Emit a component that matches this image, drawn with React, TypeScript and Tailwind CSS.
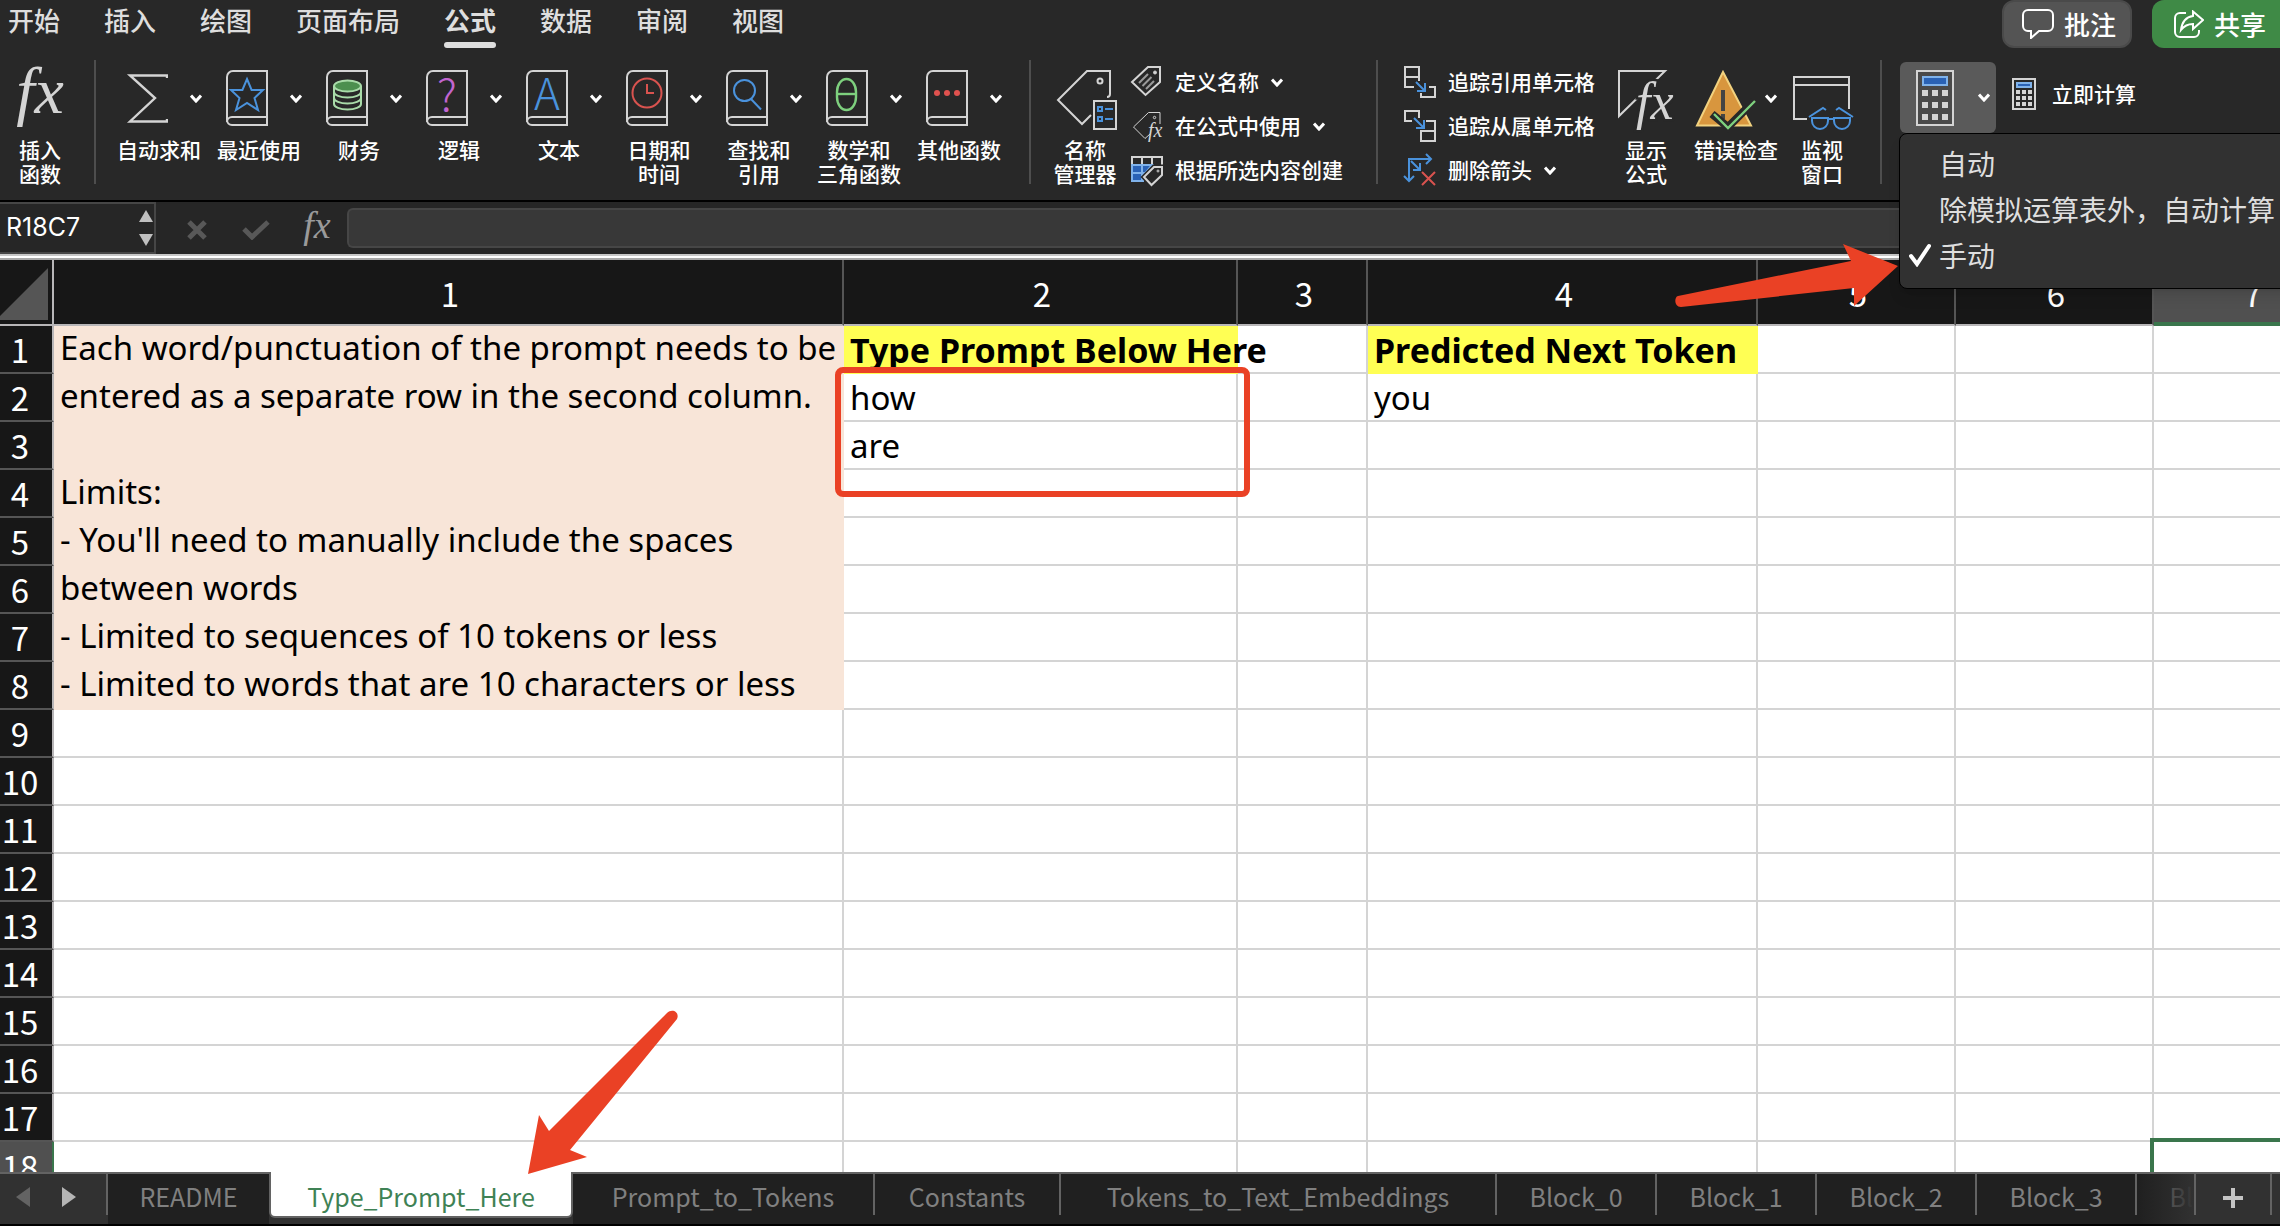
import React from 'react';

const GREY = '#d4d4d4';
const BLUE = '#4a92dc';
const RED = '#ea4125';
const SERIF = '"Liberation Serif", serif';
const CJK = '"Noto Sans CJK SC", sans-serif';

function Chevron() {
  return (
    <svg width="12" height="9" viewBox="0 0 12 9" className="shrink-0" fill="none" stroke="#ffffff" strokeWidth="3" aria-hidden="true">
      <path d="M1 1.5 6 7l5-5.5" />
    </svg>
  );
}

function FxIcon({ width, height, size, y, color }: { width: number; height: number; size: number; y: number; color: string }) {
  return (
    <svg width={width} height={height} className="shrink-0 overflow-visible" aria-hidden="true">
      <text x={width / 2} y={y} textAnchor="middle" fontFamily={SERIF} fontStyle="italic" fontSize={size} fill={color}>
        fx
      </text>
    </svg>
  );
}

function SigmaIcon() {
  return (
    <svg width="42" height="56" viewBox="0 0 42 56" fill="none" stroke={GREY} strokeWidth="2.4" aria-hidden="true">
      <path d="M41 8V5.5H4L29 28 4 51.500H41V49" />
    </svg>
  );
}

function Book({ children }: { children: React.ReactNode }) {
  return (
    <svg width="42" height="56" viewBox="0 0 42 56" fill="none" stroke={GREY} strokeWidth="2" aria-hidden="true">
      <path d="M41 1H7a6 6 0 0 0-6 6v43a5 5 0 0 0 5 5h35Z" />
      <path d="M41 47H6a5 5 0 0 0-5 5" />
      {children}
    </svg>
  );
}

const starArt = <path d="m21 9 4.600 11H37l-8.500 8 3.500 12-11-7-11 7 3.500-12L5 20h11.400Z" stroke={BLUE} />;
const moneyArt = (
  <g stroke="#a9dba9">
    <path d="M8 16v18c0 3 6 5.500 13.500 5.500S35 37 35 34V16" />
    <path d="M8 22c0 3 6 5.500 13.500 5.500S35 25 35 22M8 28c0 3 6 5.500 13.500 5.500S35 31 35 28" />
    <ellipse cx="21.500" cy="16" rx="13.500" ry="5.500" fill="#4c8f4f" />
  </g>
);
const logicArt = (
  <text x="21" y="41" textAnchor="middle" fontFamily={CJK} fontWeight="300" fontSize="44" fill="#c265d0" stroke="none">
    ?
  </text>
);
const textArt = (
  <text x="21" y="40" textAnchor="middle" fontFamily={CJK} fontWeight="300" fontSize="44" fill={BLUE} stroke="none">
    A
  </text>
);
const clockArt = (
  <g stroke="#d9534f">
    <circle cx="21" cy="23" r="14.500" />
    <path d="M21 14v9h7" />
  </g>
);
const searchArt = (
  <g stroke={BLUE}>
    <circle cx="18.500" cy="20.500" r="10.500" />
    <path d="m25 29 10 10.500" />
  </g>
);
const thetaArt = (
  <g stroke="#7ed07e" strokeWidth="2.400">
    <rect x="11" y="9" width="19" height="31" rx="9.500" ry="13" />
    <path d="M11 24h19" />
  </g>
);
const dotsArt = (
  <g fill="#e0524f" stroke="none">
    <circle cx="11" cy="23" r="3" />
    <circle cx="21" cy="23" r="3" />
    <circle cx="31" cy="23" r="3" />
  </g>
);

const functions: { lines: string[]; icon: React.ReactNode }[] = [
  { lines: ['自动求和'], icon: <SigmaIcon /> },
  { lines: ['最近使用'], icon: <Book>{starArt}</Book> },
  { lines: ['财务'], icon: <Book>{moneyArt}</Book> },
  { lines: ['逻辑'], icon: <Book>{logicArt}</Book> },
  { lines: ['文本'], icon: <Book>{textArt}</Book> },
  { lines: ['日期和', '时间'], icon: <Book>{clockArt}</Book> },
  { lines: ['查找和', '引用'], icon: <Book>{searchArt}</Book> },
  { lines: ['数学和', '三角函数'], icon: <Book>{thetaArt}</Book> },
  { lines: ['其他函数'], icon: <Book>{dotsArt}</Book> },
];

function NameManagerIcon() {
  return (
    <svg width="64" height="56" viewBox="0 0 64 56" className="overflow-visible" fill="none" stroke={GREY} strokeWidth="2" aria-hidden="true">
      <path d="M54 27c2 0 3-1 3-3V1H34L5 30l24 24 9-9" />
      <circle cx="47" cy="11" r="2.500" />
      <rect x="41" y="31" width="22" height="28" />
      <g stroke={BLUE}>
        <rect x="45" y="37" width="4" height="4" />
        <rect x="45" y="47" width="4" height="4" />
        <path d="M52 39h8M52 49h8" />
      </g>
    </svg>
  );
}

function ListIcon({ children }: { children: React.ReactNode }) {
  return (
    <svg width="32" height="32" viewBox="0 0 32 32" className="shrink-0 overflow-visible" fill="none" stroke={GREY} strokeWidth="2" aria-hidden="true">
      {children}
    </svg>
  );
}

const defineIcon = (
  <ListIcon>
    <path d="M17 1h12v15L14.500 29 1 16Z" />
    <circle cx="24" cy="6.500" r="1.500" fill={GREY} strokeWidth="1" />
    <path d="m8 17 9-9M11.500 20l9-9M15 23l8-8" stroke="#9a9a9a" />
  </ListIcon>
);
const useIcon = (
  <ListIcon>
    <g strokeWidth="1">
      <path d="M29 14V2.500H17.500L2.500 17 14 28.500l5-4.500" />
      <circle cx="23.500" cy="7.500" r="1.200" />
    </g>
    <text x="17" y="27" fontFamily={SERIF} fontStyle="italic" fontSize="20" fill={GREY} stroke="none">
      fx
    </text>
  </ListIcon>
);
const createIcon = (
  <ListIcon>
    <path d="M1 10V3h30v8M11 3v7M21 3v7" />
    <path d="M1 11h20l-9 11v5H1Z" fill="#2a62b5" stroke="#7fb2ea" />
    <path d="M11 11v16M1 19h13" stroke="#7fb2ea" />
    <path d="M23 13h8v8L20.500 31 13 23Z" fill="#282828" stroke="#282828" strokeWidth="5" />
    <path d="M23 13h8v8L20.500 31 13 23Z" fill="#282828" />
    <circle cx="27" cy="17" r="1" strokeWidth="1" />
  </ListIcon>
);
const precedentsIcon = (
  <ListIcon>
    <path d="M15 15V1H1v20h9M1 11h14M25 21h6v10H17v-4" />
    <path d="m12 16 9 9M21 17v8h-8" stroke={BLUE} />
  </ListIcon>
);
const dependentsIcon = (
  <ListIcon>
    <path d="M15 8V1H1v10h7M22 11h9v20H17V21h14" />
    <path d="m10 8 10 10M20 10v8h-8" stroke={BLUE} />
  </ListIcon>
);
const removeIcon = (
  <ListIcon>
    <path d="M5 27V5h22M22 0l5 5-5 5M0 22l5 5 5-5M7 7l9 9M16 9v7H9" stroke={BLUE} />
    <path d="m18 18 13 13M31 18 18 31" stroke="#d9534f" />
  </ListIcon>
);

function ShowFormulaIcon() {
  return (
    <svg width="56" height="56" viewBox="0 0 56 56" className="overflow-visible" fill="none" stroke={GREY} strokeWidth="2" aria-hidden="true">
      <path d="M1 46V1h46Z" />
      <text x="18" y="49" fontFamily={SERIF} fontStyle="italic" fontSize="52" fill={GREY} stroke="#282828" strokeWidth="5" paintOrder="stroke">
        fx
      </text>
    </svg>
  );
}

function ErrorCheckIcon() {
  return (
    <svg width="60" height="56" viewBox="0 0 60 56" className="overflow-visible" fill="none" aria-hidden="true">
      <path d="M28 2 2 55.500h54Z" fill="#d8963e" stroke="#f2d27f" strokeWidth="2" />
      <path d="M28 20v21M28 44v5" stroke="#444444" strokeWidth="4" />
      <path d="m17 44 16 13 26-26" stroke="#282828" strokeWidth="8" />
      <path d="m19 44 14 14 27-27" stroke="#7ed07e" strokeWidth="2.400" />
    </svg>
  );
}

function WatchIcon() {
  return (
    <svg width="60" height="56" viewBox="0 0 60 56" className="overflow-visible" fill="none" stroke={GREY} strokeWidth="2" aria-hidden="true">
      <path d="M15 49H2V7h55v32M2 15h55" />
      <path d="M20 48h16v3a8 8 0 0 1-16 0ZM42 48h16v3a8 8 0 0 1-16 0ZM36 49h6M17 47l14-9 3 2M61 47l-14-9-3 2" stroke={BLUE} />
    </svg>
  );
}

function CalculatorIcon() {
  return (
    <svg width="38" height="56" viewBox="0 0 38 56" aria-hidden="true">
      <rect x="1" y="1" width="36" height="54" fill="#4a4a4a" stroke={GREY} strokeWidth="2" />
      <rect x="7" y="7" width="24" height="8" fill="#2a62b5" stroke="#7fb2ea" strokeWidth="2" />
      {[20, 32, 44].map((y) => [6, 16, 26].map((x) => <rect key={`${x}-${y}`} x={x} y={y} width="6" height="6" fill={GREY} />))}
    </svg>
  );
}

function SmallCalculatorIcon() {
  return (
    <svg width="24" height="32" viewBox="0 0 24 32" aria-hidden="true">
      <rect x="1" y="1" width="22" height="30" fill="none" stroke={GREY} strokeWidth="2" />
      <rect x="5" y="5" width="14" height="4" fill="#2a62b5" stroke="#7fb2ea" strokeWidth="2" />
      {[12, 18, 24].map((y) => [4, 10, 16].map((x) => <rect key={`${x}-${y}`} x={x} y={y} width="4" height="4" fill={GREY} />))}
    </svg>
  );
}

function BigButton({ lines, children, className = '' }: { lines: string[]; children: React.ReactNode; className?: string }) {
  return (
    <button type="button" className={`flex shrink-0 flex-col items-center gap-[11px] pt-[22px] ${className}`}>
      <span className="flex h-14 items-center">{children}</span>
      <span className="flex flex-col items-center whitespace-nowrap text-[21px] leading-6 font-medium">
        {lines.map((l) => (
          <span key={l}>{l}</span>
        ))}
      </span>
    </button>
  );
}

function ListButton({ icon, label, menu = false }: { icon: React.ReactNode; label: string; menu?: boolean }) {
  return (
    <button type="button" className="flex h-11 items-center gap-3 whitespace-nowrap text-[21px] font-medium">
      {icon}
      {label}
      {menu && <Chevron />}
    </button>
  );
}

function Separator({ className }: { className: string }) {
  return <div className={`mt-3 h-[124px] w-0.5 shrink-0 bg-[#4e4e4e] ${className}`} />;
}

const menuTabs = ['开始', '插入', '绘图', '页面布局', '公式', '数据', '审阅', '视图'];

function MenuBar() {
  return (
    <div className="flex h-12 justify-between">
      <nav className="flex gap-11 pl-2 text-[26px] font-medium text-[#dedede]">
        {menuTabs.map((t) => (
          <button key={t} type="button" className={t === '公式' ? 'flex shrink-0 flex-col font-bold whitespace-nowrap' : 'flex shrink-0 flex-col whitespace-nowrap'}>
            <span className="h-[42px] leading-10">{t}</span>
            {t === '公式' && <span className="h-1.5 w-full rounded-full bg-[#dedede]" />}
          </button>
        ))}
      </nav>
      <div className="flex shrink-0 gap-5 text-[26px] font-medium text-white">
        <button type="button" className="flex h-12 w-[130px] items-center gap-2.5 rounded-xl border-2 border-[#4a4a4a] bg-[#545454] pl-[18px] leading-none">
          <svg width="32" height="30" viewBox="0 0 32 30" fill="none" stroke="#ffffff" strokeWidth="2" aria-hidden="true">
            <path d="M6 1h20a5 5 0 0 1 5 5v11a5 5 0 0 1-5 5h-9l-8 7v-7H6a5 5 0 0 1-5-5V6a5 5 0 0 1 5-5Z" />
          </svg>
          批注
        </button>
        <button type="button" className="flex h-12 w-32 items-center gap-2.5 rounded-l-xl bg-[#3f8a46] pl-[22px] leading-none">
          <svg width="30" height="28" viewBox="0 0 30 28" fill="none" stroke="#ffffff" strokeWidth="2" aria-hidden="true">
            <path d="M12 3H6a5 5 0 0 0-5 5v14a5 5 0 0 0 5 5h14a5 5 0 0 0 5-5v-2" />
            <path d="M19 1.500 29 10l-10 9v-5c-6 0-9 2-12 6 1-8 5-13 12-14Z" />
          </svg>
          共享
        </button>
      </div>
    </div>
  );
}

const calcModes = [
  { label: '自动', checked: false },
  { label: '除模拟运算表外，自动计算', checked: false },
  { label: '手动', checked: true },
];

function CalcMenu() {
  return (
    <div role="menu" className="absolute top-full left-0 z-20 w-[420px] -translate-x-px rounded-lg border border-black bg-[#313131] pt-1.5 pb-2.5 shadow-lg">
      {calcModes.map((m) => (
        <button key={m.label} type="button" role="menuitemradio" aria-checked={m.checked} className="flex h-[46px] w-full items-center gap-2 whitespace-nowrap pl-[9px] text-[28px] leading-[42px] text-[#dedede]">
          <svg width="22" height="24" viewBox="0 0 22 24" fill="none" stroke="#ffffff" strokeWidth="4" strokeLinecap="round" aria-hidden="true">
            {m.checked && <path d="m2 13 6 8L20 3" />}
          </svg>
          {m.label}
        </button>
      ))}
    </div>
  );
}

function Ribbon() {
  return (
    <div className="flex h-[152px] items-start text-white">
      <BigButton lines={['插入', '函数']} className="w-20">
        <FxIcon width={48} height={56} size={66} y={43} color={GREY} />
      </BigButton>
      <Separator className="mr-[13px] ml-[14px]" />
      {functions.map((f) => (
        <BigButton key={f.lines[0]} lines={f.lines} className="w-[100px]">
          <span className="flex w-[100px] items-center gap-[22px] pl-[17px]">
            {f.icon}
            <Chevron />
          </span>
        </BigButton>
      ))}
      <Separator className="mr-[22px] ml-5" />
      <BigButton lines={['名称', '管理器']}>
        <NameManagerIcon />
      </BigButton>
      <div className="ml-[14px] flex shrink-0 flex-col pt-3">
        <ListButton icon={defineIcon} label="定义名称" menu />
        <ListButton icon={useIcon} label="在公式中使用" menu />
        <ListButton icon={createIcon} label="根据所选内容创建" />
      </div>
      <Separator className="mr-[26px] ml-[33px]" />
      <div className="flex shrink-0 flex-col pt-3">
        <ListButton icon={precedentsIcon} label="追踪引用单元格" />
        <ListButton icon={dependentsIcon} label="追踪从属单元格" />
        <ListButton icon={removeIcon} label="删除箭头" menu />
      </div>
      <BigButton lines={['显示', '公式']} className="ml-[23px]">
        <ShowFormulaIcon />
      </BigButton>
      <BigButton lines={['错误检查']} className="ml-5">
        <span className="flex items-center gap-2.5">
          <ErrorCheckIcon />
          <Chevron />
        </span>
      </BigButton>
      <BigButton lines={['监视', '窗口']} className="ml-[14px]">
        <WatchIcon />
      </BigButton>
      <Separator className="mr-[18px] ml-[28px]" />
      <div className="relative mt-[14px] shrink-0">
        <button type="button" aria-label="计算选项" aria-haspopup="menu" aria-expanded="true" className="flex h-[71px] w-24 items-center gap-6 rounded-md bg-[#5a5a5a] pl-4">
          <CalculatorIcon />
          <Chevron />
        </button>
        <CalcMenu />
      </div>
      <button type="button" className="mt-6 ml-4 flex h-11 shrink-0 items-center gap-4 whitespace-nowrap text-[21px] font-medium">
        <SmallCalculatorIcon />
        立即计算
      </button>
    </div>
  );
}

function FormulaBar() {
  return (
    <div className="flex h-[52px] shrink-0 items-center bg-[#262626]">
      <div className="flex h-full w-[156px] shrink-0 items-center justify-between border-y-2 border-r-2 border-[#464646] pl-1.5">
        <input aria-label="名称框" defaultValue="R18C7" className="w-28 bg-transparent font-['Inter'] text-[25px] text-white outline-none" />
        <div className="flex flex-col gap-3 pr-px">
          <button type="button" aria-label="上一个" className="block">
            <svg width="14" height="12" aria-hidden="true"><path d="M7 0l7 12H0Z" fill="#c0c0c0" /></svg>
          </button>
          <button type="button" aria-label="下一个" className="block">
            <svg width="14" height="12" aria-hidden="true"><path d="M7 12 0 0h14Z" fill="#c0c0c0" /></svg>
          </button>
        </div>
      </div>
      <button type="button" aria-label="取消" className="ml-[31px] shrink-0 pt-1">
        <svg width="20" height="20" viewBox="0 0 20 20" stroke="#585858" strokeWidth="5" aria-hidden="true"><path d="m2 2 16 16M18 2 2 18" /></svg>
      </button>
      <button type="button" aria-label="输入" className="ml-[35px] shrink-0 pt-1">
        <svg width="28" height="20" viewBox="0 0 28 20" fill="none" stroke="#585858" strokeWidth="5" aria-hidden="true"><path d="m2 9 8 8L26 2" /></svg>
      </button>
      <button type="button" aria-label="插入函数" className="ml-8 shrink-0">
        <FxIcon width={30} height={30} size={38} y={25} color="#9a9a9a" />
      </button>
      <input aria-label="编辑栏" className="ml-[15px] h-10 min-w-0 flex-1 rounded-l-md border-2 border-r-0 border-[#464646] bg-[#383838] px-3 text-2xl text-white outline-none" />
    </div>
  );
}

const notes = [
  'Each word/punctuation of the prompt needs to be',
  'entered as a separate row in the second column.',
  '',
  'Limits:',
  "- You'll need to manually include the spaces",
  'between words',
  '- Limited to sequences of 10 tokens or less',
  '- Limited to words that are 10 characters or less',
];
const columns = [1, 2, 3, 4, 5, 6, 7];
const rows = Array.from({ length: 18 }, (_, i) => i + 1);
const cells: Record<string, string> = { '1-2': 'Type Prompt Below Here', '1-4': 'Predicted Next Token', '2-2': 'how', '3-2': 'are', '2-4': 'you' };

function Cell({ row, col }: { row: number; col: number }) {
  const value = cells[`${row}-${col}`];
  if (row === 1 && value) {
    return <td className="h-12 bg-[#ffff54] pt-0.5 pr-0 pb-0.5 pl-1.5 font-['Noto_Sans'] text-[34px] leading-11 font-bold whitespace-nowrap">{value}</td>;
  }
  return (
    <td className="relative h-12 border-r-2 border-b-2 border-[#d4d4d4] p-0 pt-0.5 pl-1.5 font-['Noto_Sans'] leading-11 whitespace-nowrap">
      {value}
      {row === 18 && col === 7 && <div className="absolute -top-1 -left-1 h-14 w-[204px] border-4 border-[#3a764c]" />}
    </td>
  );
}

function Grid() {
  return (
    <main className="min-h-0 flex-1 overflow-hidden bg-white">
      <table className="w-full table-fixed border-separate border-spacing-0 text-[33px] text-black">
        <colgroup>
          <col className="w-[54px]" />
          <col className="w-[790px]" />
          <col className="w-[394px]" />
          <col className="w-[130px]" />
          <col className="w-[390px]" />
          <col className="w-[198px]" />
          <col className="w-[198px]" />
          <col className="w-[198px]" />
        </colgroup>
        <thead>
          <tr className="bg-[#171717] text-white">
            <th className="h-[66px] border-r-2 border-b-2 border-[#b8b6b8] p-0">
              <svg width="48" height="52" viewBox="0 0 48 52" className="mt-1" role="img" aria-label="全选"><path d="M48 0v52H0v-4Z" fill="#555555" /></svg>
            </th>
            {columns.map((c) => (
              <th key={c} className={c === 7 ? 'h-[66px] border-b-4 border-b-[#3a764c] bg-[#505050] p-0 pt-1 leading-[46px] font-normal' : 'h-[66px] border-r-2 border-b-2 border-r-[#555555] border-b-[#b8b6b8] p-0 pt-0.5 pl-1 leading-[46px] font-normal'}>
                {c}
              </th>
            ))}
          </tr>
        </thead>
        <tbody>
          {rows.map((r) => (
            <tr key={r}>
              <th className={r === 18 ? 'h-12 border-r-2 border-r-[#3a764c] bg-[#505050] p-0 pr-3 leading-[46px] font-normal text-white' : 'h-12 border-r-2 border-b-2 border-r-[#b8b6b8] border-b-[#555555] bg-[#171717] p-0 pr-3 leading-[46px] font-normal text-white'}>
                {r}
              </th>
              {r === 1 && (
                <td rowSpan={8} className="bg-[#f8e5d8] p-0 pl-1.5 align-top font-['Noto_Sans'] whitespace-nowrap">
                  <div className="flex flex-col gap-1">
                    {notes.map((n, i) => (
                      <div key={i} className="h-11 leading-11">{n}</div>
                    ))}
                  </div>
                </td>
              )}
              {columns.filter((c) => c > 1 || r > 8).map((c) => (
                <Cell key={c} row={r} col={c} />
              ))}
            </tr>
          ))}
        </tbody>
      </table>
    </main>
  );
}

const sheets: { name: string; width: string }[] = [
  { name: 'README', width: 'w-[161px]' },
  { name: 'Type_Prompt_Here', width: 'w-[304px]' },
  { name: 'Prompt_to_Tokens', width: 'w-[302px]' },
  { name: 'Constants', width: 'w-[186px]' },
  { name: 'Tokens_to_Text_Embeddings', width: 'w-[436px]' },
  { name: 'Block_0', width: 'w-[160px]' },
  { name: 'Block_1', width: 'w-[160px]' },
  { name: 'Block_2', width: 'w-[160px]' },
  { name: 'Block_3', width: 'w-[160px]' },
  { name: 'Block_4', width: 'w-[160px]' },
];

function SheetTabs() {
  return (
    <footer className="flex h-[54px] shrink-0 items-start border-b-2 border-black bg-[#313131]">
      <div className="h-full w-[108px] shrink-0 border-t-2 border-[#636363]">
        <div className="flex h-[41px] items-center gap-8 border-r-2 border-[#636363] pt-1 pl-4">
          <button type="button" aria-label="上一张工作表">
            <svg width="14" height="20" aria-hidden="true"><path d="M14 0v20L0 10Z" fill="#636363" /></svg>
          </button>
          <button type="button" aria-label="下一张工作表">
            <svg width="14" height="20" aria-hidden="true"><path d="M0 0v20l14-10Z" fill="#b5b5b5" /></svg>
          </button>
        </div>
      </div>
      <div className="relative flex h-full min-w-0 flex-1 overflow-hidden text-[25px] text-[#808080]">
        {sheets.map((s) =>
          s.name === 'Type_Prompt_Here' ? (
            <button key={s.name} type="button" className={`${s.width} h-[46px] shrink-0 rounded-b-md border-x-2 border-b-2 border-[#636363] bg-white pt-1 leading-10 text-[#3f8255]`}>
              {s.name}
            </button>
          ) : (
            <button key={s.name} type="button" className={`${s.width} flex h-full shrink-0 flex-col border-t-2 border-[#636363] bg-[#202020]`}>
              <span className={s.name === 'README' ? 'h-[41px] w-full leading-11' : 'h-[41px] w-full border-r-2 border-[#636363] leading-11'}>
                {s.name}
              </span>
            </button>
          ),
        )}
        <div className="absolute top-0.5 right-0 h-full w-14 bg-gradient-to-r from-transparent to-[#313131]" />
      </div>
      <div className="h-full shrink-0 border-t-2 border-[#636363]">
        <button type="button" aria-label="新建工作表" className="flex h-[41px] w-[78px] items-center justify-center border-x-2 border-[#636363] pt-1.5">
          <svg width="20" height="20" viewBox="0 0 20 20" stroke="#c4c4c4" strokeWidth="4" aria-hidden="true"><path d="M10 0v20M0 10h20" /></svg>
        </button>
      </div>
      <div className="h-full w-2 shrink-0 border-t-2 border-[#636363]" />
    </footer>
  );
}

function Annotations() {
  return (
    <div className="pointer-events-none">
      <div className="absolute top-[367px] left-[835px] z-10 h-[130px] w-[415px] rounded-lg border-[6px] border-[#ea4125]" />
      <svg width="226" height="66" viewBox="0 0 226 66" className="absolute top-[243px] left-[1673px] z-10" aria-hidden="true">
        <path d="m225 23-55-22 8 17L5 53c-4 1-4 11 3 11l173-19 0 18Z" fill={RED} />
      </svg>
      <svg width="150" height="166" viewBox="0 0 150 166" className="absolute top-[1009px] left-[528px] z-10" aria-hidden="true">
        <path d="m0 165 11-59 10 16L139 4c5-5 13-1 10 6L42 141l17 7Z" fill={RED} />
      </svg>
    </div>
  );
}

export default function App() {
  return (
    <div className="relative flex h-screen flex-col overflow-hidden bg-black font-['Noto_Sans_CJK_SC',sans-serif]">
      <header className="shrink-0 border-b-2 border-black bg-[#282828]">
        <MenuBar />
        <Ribbon />
      </header>
      <FormulaBar />
      <div className="h-1.5 shrink-0 border-y-2 border-t-[#c8c8c8] border-b-[#a8a8a8] bg-white" />
      <Grid />
      <SheetTabs />
      <Annotations />
    </div>
  );
}
